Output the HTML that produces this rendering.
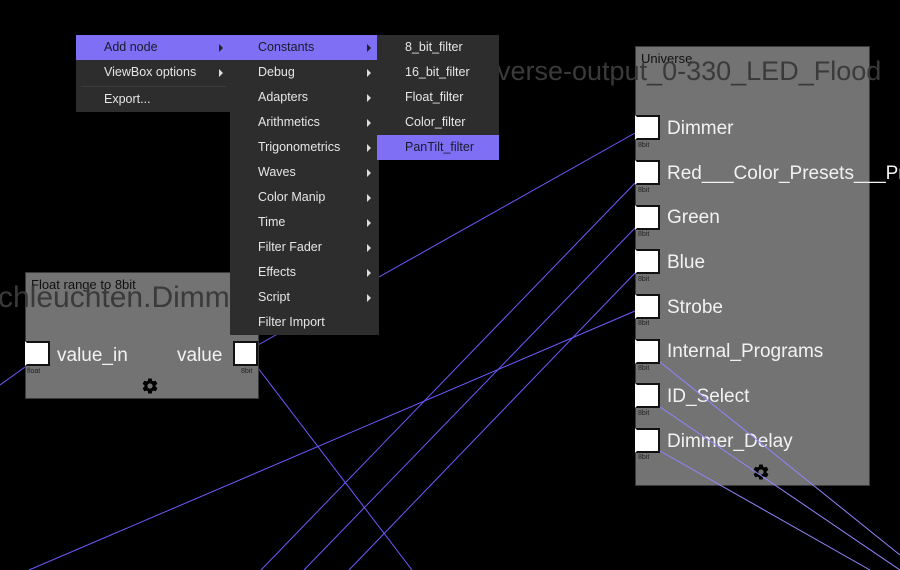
<!DOCTYPE html>
<html><head><meta charset="utf-8"><style>
*{margin:0;padding:0;box-sizing:border-box}
body{width:900px;height:570px;background:#000;overflow:hidden;position:relative;font-family:"Liberation Sans","DejaVu Sans",sans-serif}
.abs{position:absolute}
.node{position:absolute;background:#737373;border:1px solid #3a3a3a}
.title{position:absolute;font-size:13px;color:#111;white-space:nowrap}
.big{position:absolute;font-size:27px;color:#3a3a3a;white-space:nowrap}
.port{position:absolute;width:25px;height:25px;background:#fff;border:2px solid #111;border-left-color:#fff}
.plab{position:absolute;font-size:19px;color:#f2f2f2;white-space:nowrap}
.tiny{position:absolute;font-size:7px;color:#222}
.menu{position:absolute;background:#2d2d2d}
.mi{position:absolute;left:0;right:0;height:25px;line-height:25px;font-size:12.5px;color:#e6e6e6;white-space:nowrap}
.mi.h{background:#7f6ff5;color:#1a1a2a}
.arr{position:absolute;right:8px;top:9px;width:0;height:0;border-left:4px solid #ddd;border-top:4px solid transparent;border-bottom:4px solid transparent}
</style></head><body>

<svg class="abs" style="left:0;top:0" width="900" height="570">
<g stroke="#6a5cff" stroke-width="1" fill="none">
<line x1="258" y1="345" x2="635" y2="133"/>
<line x1="0" y1="385" x2="25" y2="367"/>
<line x1="258" y1="368" x2="412" y2="570"/>
<line x1="261" y1="570" x2="635" y2="183"/>
<line x1="304" y1="570" x2="635" y2="228"/>
<line x1="349" y1="570" x2="635" y2="273"/>
<line x1="29" y1="570" x2="635" y2="311"/>
</g>
</svg>

<div class="node" style="left:25px;top:272px;width:234px;height:127px">
<div class="title" style="left:5px;top:4px">Float range to 8bit</div>
</div>
<div class="big" style="left:-2px;top:281px;font-size:30px">chleuchten.Dimm</div>
<div class="port" style="left:25px;top:341px"></div>
<div class="plab" style="left:57px;top:345px">value_in</div>
<div class="tiny" style="left:27px;top:368px">float</div>
<div class="plab" style="left:177px;top:345px">value</div>
<div class="port" style="left:233px;top:341px;border-left-color:#111"></div>
<div class="tiny" style="left:241px;top:368px">8bit</div>
<svg class="abs" style="left:141px;top:377px" width="18" height="18" viewBox="0 0 24 24"><path fill="#000" d="M19.4 13c.04-.33.1-.66.1-1s-.06-.67-.1-1l2.1-1.65c.2-.15.24-.42.12-.64l-2-3.46c-.12-.22-.39-.3-.61-.22l-2.49 1c-.52-.4-1.08-.73-1.690-.98l-.38-2.65A.49.49 0 0 0 14 2h-4c-.25 0-.46.18-.49.42l-.38 2.65c-.61.25-1.17.59-1.69.98l-2.49-1c-.23-.09-.49 0-.61.22l-2 3.46c-.13.22-.07.49.12.64L4.6 11c-.04.33-.1.66-.1 1s.06.67.1 1l-2.1 1.65c-.2.15-.25.42-.12.64l2 3.46c.12.22.39.3.61.22l2.49-1c.52.4 1.08.73 1.69.98l.38 2.65c.03.24.24.42.49.42h4c.25 0 .46-.18.49-.42l.38-2.65c.61-.25 1.17-.59 1.69-.98l2.49 1c.23.09.49 0 .61-.22l2-3.46c.12-.22.07-.49-.12-.64L19.4 13zM12 15.5a3.5 3.5 0 1 1 0-7 3.5 3.5 0 0 1 0 7z"/></svg>

<div class="node" style="left:635px;top:46px;width:235px;height:440px">
<div class="title" style="left:5px;top:4px">Universe</div>
</div>
<div class="big" style="left:497px;top:56px">verse-output_0-330_LED_Flood</div>

<div class="port" style="left:635px;top:115px"></div><div class="plab" style="left:667px;top:118px">Dimmer</div><div class="tiny" style="left:638px;top:142px">8bit</div>
<div class="port" style="left:635px;top:160px"></div><div class="plab" style="left:667px;top:163px">Red___Color_Presets___Pr</div><div class="tiny" style="left:638px;top:187px">8bit</div>
<div class="port" style="left:635px;top:205px"></div><div class="plab" style="left:667px;top:207px">Green</div><div class="tiny" style="left:638px;top:231px">8bit</div>
<div class="port" style="left:635px;top:249px"></div><div class="plab" style="left:667px;top:252px">Blue</div><div class="tiny" style="left:638px;top:276px">8bit</div>
<div class="port" style="left:635px;top:294px"></div><div class="plab" style="left:667px;top:297px">Strobe</div><div class="tiny" style="left:638px;top:320px">8bit</div>
<div class="port" style="left:635px;top:339px"></div><div class="plab" style="left:667px;top:341px">Internal_Programs</div><div class="tiny" style="left:638px;top:365px">8bit</div>
<div class="port" style="left:635px;top:383px"></div><div class="plab" style="left:667px;top:386px">ID_Select</div><div class="tiny" style="left:638px;top:410px">8bit</div>
<div class="port" style="left:635px;top:428px"></div><div class="plab" style="left:667px;top:431px">Dimmer_Delay</div><div class="tiny" style="left:638px;top:454px">8bit</div>
<svg class="abs" style="left:752px;top:463px" width="18" height="18" viewBox="0 0 24 24"><path fill="#000" d="M19.4 13c.04-.33.1-.66.1-1s-.06-.67-.1-1l2.1-1.65c.2-.15.24-.42.12-.64l-2-3.46c-.12-.22-.39-.3-.61-.22l-2.49 1c-.52-.4-1.08-.73-1.69-.98l-.38-2.65A.49.49 0 0 0 14 2h-4c-.25 0-.46.18-.49.42l-.38 2.65c-.61.25-1.17.59-1.69.98l-2.49-1c-.23-.09-.49 0-.61.22l-2 3.46c-.13.22-.07.49.12.64L4.6 11c-.04.33-.1.66-.1 1s.06.67.1 1l-2.1 1.65c-.2.15-.25.42-.12.64l2 3.46c.12.22.39.3.61.22l2.49-1c.52.4 1.08.73 1.69.98l.38 2.65c.03.24.24.42.49.42h4c.25 0 .46-.18.49-.42l.38-2.65c.61-.25 1.17-.59 1.69-.98l2.49 1c.23.09.49 0 .61-.22l2-3.46c.12-.22.07-.49-.12-.64L19.4 13zM12 15.5a3.5 3.5 0 1 1 0-7 3.5 3.5 0 0 1 0 7z"/></svg>

<svg class="abs" style="left:0;top:0" width="900" height="570">
<g stroke="#8f86ff" stroke-width="1" fill="none">
<line x1="660" y1="362" x2="900" y2="555"/>
<line x1="660" y1="407" x2="900" y2="570"/>
<line x1="660" y1="451" x2="870" y2="570"/>
</g>
</svg>

<div class="menu" style="left:76px;top:35px;width:155px;height:77px">
<div class="mi h" style="top:0;padding-left:28px">Add node<span class="arr" style="border-left-color:#222"></span></div>
<div class="mi" style="top:25px;padding-left:28px">ViewBox options<span class="arr"></span></div>
<div class="abs" style="left:5px;right:5px;top:51px;height:1px;background:#3c3c3c"></div>
<div class="mi" style="top:52px;padding-left:28px">Export...</div>
</div>

<div class="menu" style="left:230px;top:35px;width:149px;height:300px">
<div class="mi h" style="top:0;padding-left:28px">Constants<span class="arr" style="border-left-color:#222"></span></div>
<div class="mi" style="top:25px;padding-left:28px">Debug<span class="arr"></span></div>
<div class="mi" style="top:50px;padding-left:28px">Adapters<span class="arr"></span></div>
<div class="mi" style="top:75px;padding-left:28px">Arithmetics<span class="arr"></span></div>
<div class="mi" style="top:100px;padding-left:28px">Trigonometrics<span class="arr"></span></div>
<div class="mi" style="top:125px;padding-left:28px">Waves<span class="arr"></span></div>
<div class="mi" style="top:150px;padding-left:28px">Color Manip<span class="arr"></span></div>
<div class="mi" style="top:175px;padding-left:28px">Time<span class="arr"></span></div>
<div class="mi" style="top:200px;padding-left:28px">Filter Fader<span class="arr"></span></div>
<div class="mi" style="top:225px;padding-left:28px">Effects<span class="arr"></span></div>
<div class="mi" style="top:250px;padding-left:28px">Script<span class="arr"></span></div>
<div class="mi" style="top:275px;padding-left:28px">Filter Import</div>
</div>

<div class="menu" style="left:377px;top:35px;width:122px;height:125px">
<div class="mi" style="top:0;padding-left:28px">8_bit_filter</div>
<div class="mi" style="top:25px;padding-left:28px">16_bit_filter</div>
<div class="mi" style="top:50px;padding-left:28px">Float_filter</div>
<div class="mi" style="top:75px;padding-left:28px">Color_filter</div>
<div class="mi h" style="top:100px;padding-left:28px">PanTilt_filter</div>
</div>

</body></html>
